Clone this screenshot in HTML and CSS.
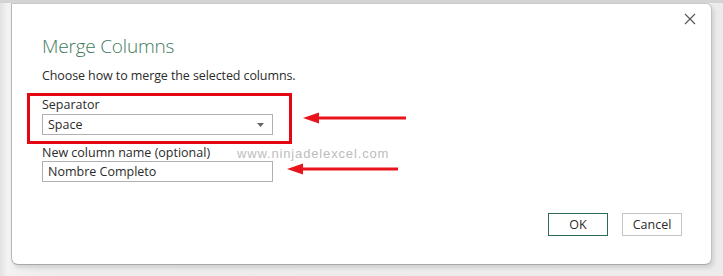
FILE: index.html
```html
<!DOCTYPE html>
<html>
<head>
<meta charset="utf-8">
<link rel="stylesheet" href="styles.css">
</head>
<body>
<div class="topstrip">
  <div class="seg seg1"></div>
  <div class="seg seg2"></div>
</div>
<div class="stage">
  <div class="dialog">
    <div class="close">
      <svg width="12" height="12" viewBox="0 0 12 12"><path d="M1 1 L11 11 M11 1 L1 11" stroke="#555" stroke-width="1.1" fill="none"/></svg>
    </div>
    <h1 class="title">Merge Columns</h1>
    <p class="desc">Choose how to merge the selected columns.</p>
    <div class="highlight">
      <label class="label">Separator</label>
      <div class="select">
        <span>Space</span>
        <svg class="caret" width="7" height="4" viewBox="0 0 7 4"><path d="M0 0 L7 0 L3.5 4 Z" fill="#666"/></svg>
      </div>
    </div>
    <div class="field2">
      <label class="label">New column name (optional)</label>
      <div class="input">Nombre Completo</div>
      <div class="watermark">www.ninjadelexcel.com</div>
    </div>
    <div class="buttons">
      <button class="btn ok">OK</button>
      <button class="btn">Cancel</button>
    </div>
    <svg class="arrow arrow1" width="104" height="12" viewBox="0 0 104 12"><path d="M14 6 H103" stroke="#e8141b" stroke-width="3"/><path d="M0 6 L16 0.5 L16 11.5 Z" fill="#e8141b"/></svg>
    <svg class="arrow arrow2" width="112" height="12" viewBox="0 0 112 12"><path d="M14 6 H111" stroke="#e8141b" stroke-width="3"/><path d="M0 6 L16 0.5 L16 11.5 Z" fill="#e8141b"/></svg>
  </div>
</div>
</body>
</html>
```
FILE: styles.css
```css
* { box-sizing: border-box; }
html, body { margin: 0; padding: 0; }
body {
  width: 723px;
  height: 276px;
  overflow: hidden;
  background: linear-gradient(to right, #e2e2e2 0px, #f3f3f3 8px, #ededed 40px, #ececec 100%);
  font-family: "Segoe UI", "Open Sans", "Noto Sans", sans-serif;
  position: relative;
}
.topstrip {
  height: 3px;
  background: #d4d4d4;
  position: relative;
  display: flex;
}
.seg { height: 1px; background: #fff; margin-top: 2px; }
.seg1 { width: 0; }
.stage {
  padding-left: 11px;
  padding-right: 11px;
}
.dialog {
  position: relative;
  width: 701px;
  height: 262px;
  background: #fff;
  border-left: 1px solid #b5b5b5;
  border-top: 1px solid #c8c8c8;
  border-right: 1px solid #c2c2c2;
  border-bottom: 1px solid #a9a9a9;
  border-radius: 0 6px 7px 7px;
  box-shadow: 2px 3px 4px rgba(0,0,0,0.12);
  padding: 30px 0 0 30px;
}
.close {
  position: absolute;
  right: 15px;
  top: 9px;
  width: 12px;
  height: 12px;
  line-height: 0;
}
.title {
  margin: 0;
  font-weight: 300;
  font-size: 19px;
  line-height: 24px;
  color: #3f7a5d;
  letter-spacing: -0.2px;
}
.desc {
  margin: 10px 0 0 0;
  font-size: 12.5px;
  line-height: 16px;
  color: #2b2b2b;
  letter-spacing: -0.1px;
}
.highlight {
  margin: 9px 0 0 -15px;
  width: 265px;
  height: 51px;
  border: 3px solid #e30613;
  padding: 1px 0 0 12px;
}
.label {
  display: block;
  font-size: 12.5px;
  line-height: 15px;
  color: #2b2b2b;
}
.select {
  margin-top: 2px;
  width: 231px;
  height: 21px;
  border: 1px solid #b0b0b0;
  display: flex;
  align-items: center;
  justify-content: space-between;
  padding: 0 8px 0 5px;
  font-size: 12.5px;
  color: #2b2b2b;
}
.caret { margin-top: 1px; }
.field2 {
  position: relative;
  margin-top: 1px;
}
.field2 .label { line-height: 15px; margin-top: 0; }
.input {
  margin-top: 1px;
  width: 231px;
  height: 21px;
  border: 1px solid #b0b0b0;
  padding: 0 5px;
  font-size: 12.5px;
  line-height: 19px;
  color: #2b2b2b;
}
.watermark {
  position: absolute;
  left: 195px;
  top: 1px;
  font-family: "Liberation Sans", sans-serif;
  font-size: 13px;
  letter-spacing: 0.85px;
  color: #bdbdbd;
}
.buttons {
  position: absolute;
  right: 29px;
  bottom: 28px;
  display: flex;
  gap: 14px;
}
.btn {
  width: 60px;
  height: 23px;
  background: #fff;
  border: 1px solid #c4c4c4;
  font-family: inherit;
  font-size: 12.5px;
  color: #2b2b2b;
  padding: 0;
}
.btn.ok { border-color: #2e6b50; }
.arrow { position: absolute; }
.arrow1 { left: 291px; top: 108px; }
.arrow2 { left: 275px; top: 159px; }
```
